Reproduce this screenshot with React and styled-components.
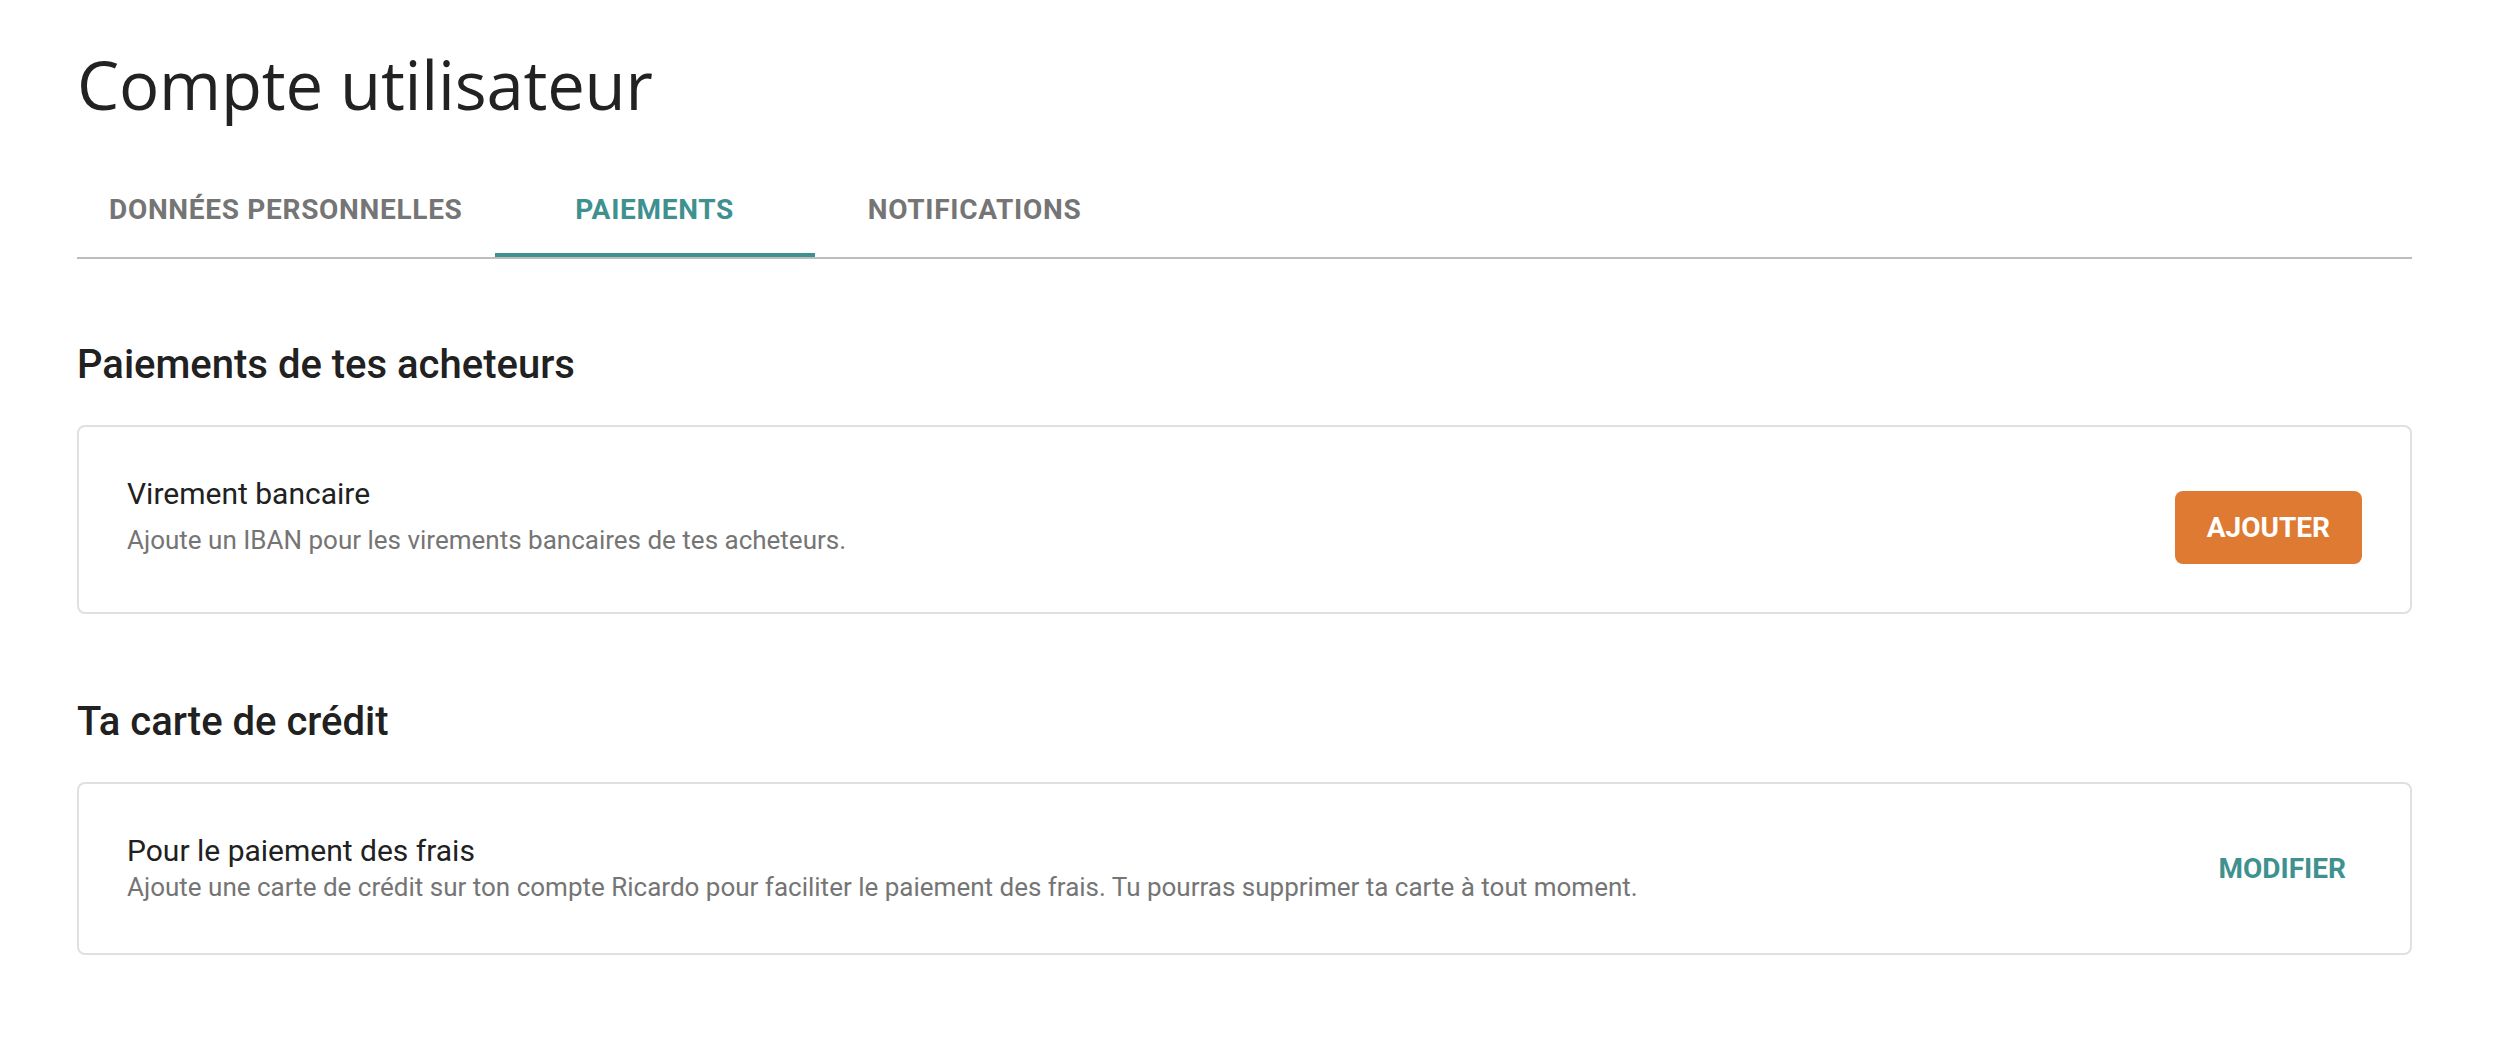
import React, { useState } from "react";
import styled, { createGlobalStyle } from "styled-components";

const GlobalStyle = createGlobalStyle`
  html, body {
    margin: 0;
    padding: 0;
    background: #ffffff;
  }
  body {
    font-family: Roboto, "Liberation Sans", Arial, sans-serif;
    color: #212121;
  }
  * { box-sizing: border-box; }
`;

const Page = styled.div`
  padding: 44px 94px 60px 77px;
`;

const Title = styled.h1`
  margin: 0;
  font-family: "Open Sans", "Noto Sans", sans-serif;
  font-weight: 400;
  font-size: 67px;
  line-height: 80px;
  color: #222222;
  letter-spacing: -0.2px;
`;

const TabBar = styled.div`
  display: flex;
  margin-top: 37px;
  border-bottom: 2px solid #bdbdbd;
`;

const Tab = styled.button`
  position: relative;
  display: flex;
  align-items: center;
  justify-content: center;
  height: 96px;
  min-width: 320px;
  padding: 0 32px;
  border: 0;
  background: transparent;
  cursor: pointer;
  font-family: Roboto, "Liberation Sans", sans-serif;
  font-weight: 700;
  font-size: 28px;
  letter-spacing: 0.7px;
  text-transform: uppercase;
  color: ${(p) => (p.$active ? "#3f918f" : "#757575")};

  &::after {
    content: "";
    position: absolute;
    left: 0;
    right: 0;
    bottom: 0;
    height: 4px;
    background: ${(p) => (p.$active ? "#3f918f" : "transparent")};
  }
`;

const SectionTitle = styled.h2`
  margin: ${(p) => p.$top}px 0 36px;
  font-family: Roboto, "Liberation Sans", sans-serif;
  font-weight: 500;
  font-size: 40px;
  line-height: 48px;
  color: #212121;
`;

const Card = styled.div`
  display: flex;
  align-items: center;
  justify-content: space-between;
  padding: 48px;
  border: 2px solid #e0e0e0;
  border-radius: 8px;
  background: #ffffff;
`;

const TextBlock = styled.div`
  display: flex;
  flex-direction: column;
  gap: ${(p) => p.$gap}px;
  align-self: flex-start;
`;

const ItemTitle = styled.div`
  font-size: 30px;
  line-height: 38px;
  font-weight: 400;
  color: #212121;
`;

const ItemText = styled.div`
  font-size: 26px;
  line-height: 35px;
  font-weight: 400;
  color: #757575;
`;

const PrimaryButton = styled.button`
  align-self: flex-start;
  margin-top: 16px;
  height: 73px;
  padding: 0 32px;
  border: 0;
  border-radius: 8px;
  background: #df7a32;
  color: #ffffff;
  font-family: Roboto, "Liberation Sans", sans-serif;
  font-weight: 700;
  font-size: 28px;
  letter-spacing: 0;
  text-transform: uppercase;
  cursor: pointer;
`;

const TextButton = styled.button`
  height: 73px;
  padding: 0 16px;
  border: 0;
  border-radius: 8px;
  background: transparent;
  color: #3f918f;
  font-family: Roboto, "Liberation Sans", sans-serif;
  font-weight: 700;
  font-size: 28px;
  letter-spacing: 0;
  text-transform: uppercase;
  cursor: pointer;
`;

const tabs = ["Données personnelles", "Paiements", "Notifications"];

export default function App() {
  const [active, setActive] = useState(1);
  return (
    <>
      <GlobalStyle />
      <Page>
        <Title>Compte utilisateur</Title>
        <TabBar>
          {tabs.map((t, i) => (
            <Tab key={t} $active={i === active} onClick={() => setActive(i)}>
              {t}
            </Tab>
          ))}
        </TabBar>

        <SectionTitle $top={82}>Paiements de tes acheteurs</SectionTitle>
        <Card>
          <TextBlock $gap={10}>
            <ItemTitle>Virement bancaire</ItemTitle>
            <ItemText>Ajoute un IBAN pour les virements bancaires de tes acheteurs.</ItemText>
          </TextBlock>
          <PrimaryButton>Ajouter</PrimaryButton>
        </Card>

        <SectionTitle $top={84}>Ta carte de crédit</SectionTitle>
        <Card>
          <TextBlock $gap={0}>
            <ItemTitle>Pour le paiement des frais</ItemTitle>
            <ItemText>
              Ajoute une carte de crédit sur ton compte Ricardo pour faciliter le paiement des frais. Tu pourras supprimer ta carte à tout moment.
            </ItemText>
          </TextBlock>
          <TextButton>Modifier</TextButton>
        </Card>
      </Page>
    </>
  );
}
